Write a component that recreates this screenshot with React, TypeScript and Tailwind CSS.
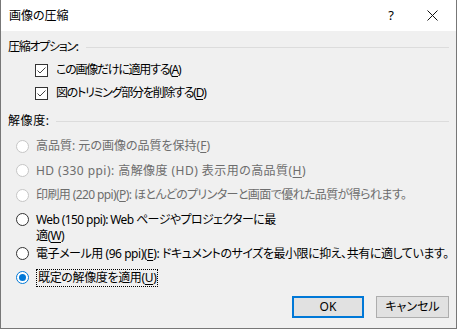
import React from "react";

const font = "font-['Noto_Sans','Noto_Sans_CJK_JP',sans-serif] [font-feature-settings:'palt']";

const Key: React.FC<{ k: string }> = ({ k }) => (
  <>
    (<span className="underline underline-offset-2">{k}</span>)
  </>
);

const SectionHeader: React.FC<{ label: string; className?: string }> = ({ label, className }) => (
  <div className="flex h-4 shrink-0 items-center pr-[7px]">
    <span className={`leading-4 whitespace-nowrap ${className ?? ""}`}>{label}</span>
    <div className="h-px flex-1 bg-[#dcdcdc]" />
  </div>
);

const CheckRow: React.FC<{ children: React.ReactNode; className?: string; text?: string }> = ({
  children,
  className,
  text,
}) => (
  <div className={`flex h-4 shrink-0 items-center pl-[27px] ${className ?? ""}`}>
    <div className="flex h-[13px] w-[13px] items-center justify-center border border-[#333] bg-white">
      <svg width="11" height="11" viewBox="0 0 11 11">
        <path d="M1.5 5.5 L4 8 L9.5 2.5" fill="none" stroke="#444" strokeWidth="1" />
      </svg>
    </div>
    <span className={`ml-[8px] leading-4 whitespace-nowrap ${text ?? ""}`}>{children}</span>
  </div>
);

type RadioProps = {
  children: React.ReactNode;
  disabled?: boolean;
  checked?: boolean;
  className?: string;
  text?: string;
};

const RadioRow: React.FC<RadioProps> = ({ children, disabled, checked, className, text }) => (
  <div className={`flex shrink-0 items-start pl-[8px] ${className ?? ""}`}>
    <div className="flex h-4 items-center">
      {checked ? (
        <div className="flex h-[13px] w-[13px] items-center justify-center rounded-full border border-[#0078d7] bg-white">
          <div className="h-[7px] w-[7px] rounded-full bg-[#0078d7]" />
        </div>
      ) : (
        <div
          className={`h-[13px] w-[13px] rounded-full border bg-white ${
            disabled ? "border-[#c6c6c6]" : "border-[#333]"
          }`}
        />
      )}
    </div>
    <span
      className={`ml-[7px] leading-4 whitespace-nowrap ${disabled ? "text-[#6d6d6d]" : "text-black"} ${
        checked ? "-my-px border border-dotted border-black px-px" : ""
      } ${text ?? ""}`}
    >
      {children}
    </span>
  </div>
);

export default function App() {
  return (
    <div className={`h-[329px] w-[457px] overflow-hidden bg-[#f0f0f0] text-[12px] text-black ${font}`}>
      <div className="flex h-[329px] flex-col border-x border-b border-[#777]">
        <div className="flex h-[31px] shrink-0 items-center bg-white">
          <span className="ml-[8px] flex-1">画像の圧縮</span>
          <span className="mr-[33px] text-[13px]">?</span>
          <svg width="11" height="11" viewBox="0 0 11 11" className="mr-[18px]">
            <path d="M0.5 0.5 L10.5 10.5 M10.5 0.5 L0.5 10.5" stroke="#111" strokeWidth="1" />
          </svg>
        </div>

        <div className="flex flex-1 flex-col pl-[7px]">
          <div className="mt-[8px]">
            <SectionHeader label="圧縮オプション:" className="mr-[8px] tracking-[-1.3px]" />
          </div>
          <CheckRow className="mt-[7px]" text="tracking-[-1.25px]">
            この画像だけに適用する<Key k="A" />
          </CheckRow>
          <CheckRow className="mt-[7px]" text="tracking-[-1.25px]">
            図のトリミング部分を削除する<Key k="D" />
          </CheckRow>

          <div className="mt-[12px]">
            <SectionHeader label="解像度:" className="mr-[6px] tracking-[0.6px]" />
          </div>
          <RadioRow disabled className="mt-[9px]">
            高品質: 元の画像の品質を保持<Key k="F" />
          </RadioRow>
          <RadioRow disabled className="mt-[8.5px]" text="tracking-[0.45px]">
            HD (330 ppi): 高解像度 (HD) 表示用の高品質<Key k="H" />
          </RadioRow>
          <RadioRow disabled className="mt-[8.5px]" text="tracking-[-0.6px]">
            印刷用 (220 ppi)<Key k="P" />: ほとんどのプリンターと画面で優れた品質が得られます。
          </RadioRow>
          <RadioRow className="mt-[8.5px]" text="tracking-[-0.6px]">
            Web (150 ppi): Web ページやプロジェクターに最
            <br />
            適<Key k="W" />
          </RadioRow>
          <RadioRow className="mt-[2px]" text="tracking-[-0.45px]">
            電子メール用 (96 ppi)<Key k="E" />: ドキュメントのサイズを最小限に抑え、共有に適しています。
          </RadioRow>
          <RadioRow checked className="mt-[8px]" text="tracking-[-0.35px]">
            既定の解像度を適用<Key k="U" />
          </RadioRow>

          <div className="mt-auto mb-[10px] flex justify-end gap-[12px] pr-[7px]">
            <button className="h-[22px] w-[72px] border-2 border-[#0078d7] bg-[#e1e1e1] leading-none">OK</button>
            <button className="h-[22px] w-[73px] border border-[#adadad] bg-[#e1e1e1] leading-none">
              キャンセル
            </button>
          </div>
        </div>
      </div>
    </div>
  );
}
